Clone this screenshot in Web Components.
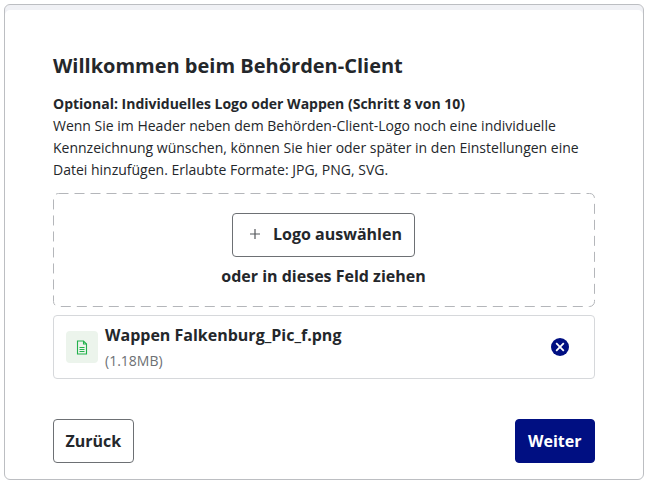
<!DOCTYPE html>
<html>
<head>
<meta charset="utf-8">
<style>
  html, body { margin: 0; height: 100%; background: #fff; }
  body { font-family: "Open Sans", sans-serif; color: #24272b; }
</style>
</head>
<body>
<wizard-card>
  <span slot="title">Willkommen beim Behörden-Client</span>
  <span slot="step">Optional: Individuelles Logo oder Wappen (Schritt 8 von 10)</span>
  Wenn Sie im Header neben dem Behörden-Client-Logo noch eine individuelle Kennzeichnung wünschen, können Sie hier oder später in den Einstellungen eine Datei hinzufügen. Erlaubte Formate: JPG, PNG, SVG.
  <drop-zone slot="body"></drop-zone>
  <file-row slot="body" name="Wappen Falkenburg_Pic_f.png" size="(1.18MB)"></file-row>
  <wizard-button slot="back">Zurück</wizard-button>
  <wizard-button slot="next" primary>Weiter</wizard-button>
</wizard-card>
<script>
class WizardCard extends HTMLElement {
    constructor() {
        super();
        const shadow = this.attachShadow({ mode: 'open' });
        shadow.innerHTML = `
            <style>
                :host { display: block; padding: 4px 5px 4px 4px; box-sizing: border-box; height: 484px; }
                main {
                    height: 476px;
                    box-sizing: border-box;
                    border: 1px solid #bcbec2;
                    border-radius: 6px;
                    box-shadow: inset 0 5px 0 #f0f1f5;
                    padding: 46px 48px 16px 48px;
                    display: flex;
                    flex-direction: column;
                }
                h1 { margin: 0 0 12px; font-size: 20px; line-height: 30px; font-weight: 700; }
                .step { font-size: 14px; line-height: 22px; font-weight: 700; }
                .text { font-size: 14px; line-height: 22px; }
                .body { display: flex; flex-direction: column; gap: 8px; margin-top: 12px; }
                footer { margin-top: auto; display: flex; justify-content: space-between; }
            </style>
            <main>
                <h1><slot name="title"></slot></h1>
                <div class="step"><slot name="step"></slot></div>
                <div class="text"><slot></slot></div>
                <div class="body"><slot name="body"></slot></div>
                <footer><slot name="back"></slot><slot name="next"></slot></footer>
            </main>
        `;
    }
}

class DropZone extends HTMLElement {
    constructor() {
        super();
        const shadow = this.attachShadow({ mode: 'open' });
        shadow.innerHTML = `
            <style>
                :host { display: block; position: relative; }
                .zone {
                    height: 114px;
                    box-sizing: border-box;
                    display: flex;
                    flex-direction: column;
                    align-items: center;
                    padding-top: 20px;
                    padding-right: 1px;
                    gap: 8px;
                }
                .dash { position: absolute; inset: 0; width: 100%; height: 100%; pointer-events: none; }
                button {
                    height: 44px;
                    width: 183px;
                    box-sizing: border-box;
                    background: #fff;
                    border: 1px solid #6d7074;
                    border-radius: 4px;
                    font: 700 16px "Open Sans", sans-serif;
                    color: #24272b;
                    display: flex;
                    align-items: center;
                    justify-content: center;
                    gap: 12px;
                    padding: 0 0 2px 4px;
                }
                button svg { width: 12px; height: 12px; }
                p { margin: 0; font-size: 16px; line-height: 22px; font-weight: 700; }
            </style>
            <div class="zone">
                <svg class="dash"><rect x=".5" y=".5" width="541" height="113" rx="5" fill="none" stroke="#b4b6ba" stroke-dasharray="10 6"/></svg>
                <button>
                    <svg viewBox="0 0 12 12"><path d="M6 1v10M1 6h10" stroke="#55585c" stroke-width="1.2" fill="none"/></svg>
                    Logo auswählen
                </button>
                <p>oder in dieses Feld ziehen</p>
            </div>
        `;
    }
}

class FileRow extends HTMLElement {
    constructor() {
        super();
        const shadow = this.attachShadow({ mode: 'open' });
        shadow.innerHTML = `
            <style>
                :host { display: block; }
                .row {
                    height: 64px;
                    box-sizing: border-box;
                    border: 1px solid #d6d8db;
                    border-radius: 4px;
                    display: flex;
                    align-items: center;
                    padding: 0 25px 0 12px;
                }
                .icon {
                    width: 32px;
                    height: 32px;
                    border-radius: 4px;
                    background: #ecf4ec;
                    display: flex;
                    align-items: center;
                    justify-content: center;
                    margin-right: 7px;
                }
                .info { flex: 1; padding-bottom: 1px; }
                .name { font-size: 16px; line-height: 24px; font-weight: 700; }
                .size { font-size: 14px; line-height: 20px; color: #6d7074; margin-top: 4px; }
            </style>
            <div class="row">
                <span class="icon">
                    <svg width="12" height="15" viewBox="0 0 12 15" fill="none" stroke="#22b14c" stroke-width="1.1">
                        <path d="M1.500 1h6l3 3v10h-9z"/><path d="M7.500 1v3h3M3.500 7.500h5M3.500 9.500h5M3.500 11.500h5"/>
                    </svg>
                </span>
                <div class="info">
                    <div class="name">${this.getAttribute('name')}</div>
                    <div class="size">${this.getAttribute('size')}</div>
                </div>
                <svg width="18" height="18" viewBox="0 0 18 18">
                    <circle cx="9" cy="9" r="9" fill="#000f82"/>
                    <path d="M5.200 5.200l7.600 7.600M12.800 5.200l-7.600 7.600" stroke="#fff" stroke-width="1.800"/>
                </svg>
            </div>
        `;
    }
}

class WizardButton extends HTMLElement {
    constructor() {
        super();
        const shadow = this.attachShadow({ mode: 'open' });
        shadow.innerHTML = `
            <style>
                :host { display: block; }
                button {
                    height: 44px;
                    padding: 0 11.500px;
                    background: #fff;
                    border: 1px solid #6d7074;
                    border-radius: 4px;
                    font: 700 16px "Open Sans", sans-serif;
                    color: #24272b;
                }
                :host([primary]) button { background: #000f82; border-color: #000f82; color: #fff; padding: 0 12.500px; }
            </style>
            <button><slot></slot></button>
        `;
    }
}

customElements.define('wizard-card', WizardCard);
customElements.define('drop-zone', DropZone);
customElements.define('file-row', FileRow);
customElements.define('wizard-button', WizardButton);
</script>
</body>
</html>
